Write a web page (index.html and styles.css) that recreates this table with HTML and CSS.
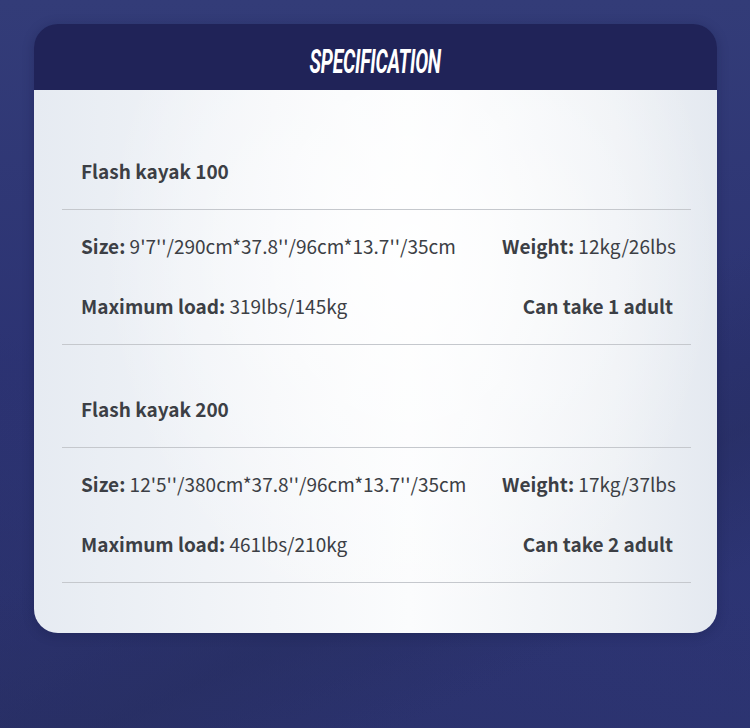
FILE: index.html
```html
<!DOCTYPE html>
<html lang="en">
<head>
<meta charset="utf-8">
<title>Specification</title>
<link rel="stylesheet" href="styles.css">
</head>
<body>
<div class="page">
  <div class="card">
    <div class="card-header">
      <h1 class="title">SPECIFICATION</h1>
    </div>
    <div class="card-body">
      <section class="group">
        <h2 class="model">Flash kayak 100</h2>
        <div class="specs">
          <div class="spec-row">
            <span><b>Size:</b> 9'7''/290cm*37.8''/96cm*13.7''/35cm</span>
            <span><b>Weight:</b> 12kg/26lbs</span>
          </div>
          <div class="spec-row">
            <span><b>Maximum load:</b> 319lbs/145kg</span>
            <span class="strong">Can take 1 adult</span>
          </div>
        </div>
      </section>
      <section class="group">
        <h2 class="model">Flash kayak 200</h2>
        <div class="specs">
          <div class="spec-row">
            <span><b>Size:</b> 12'5''/380cm*37.8''/96cm*13.7''/35cm</span>
            <span><b>Weight:</b> 17kg/37lbs</span>
          </div>
          <div class="spec-row">
            <span><b>Maximum load:</b> 461lbs/210kg</span>
            <span class="strong">Can take 2 adult</span>
          </div>
        </div>
      </section>
    </div>
  </div>
</div>
</body>
</html>
```

FILE: styles.css
```css
* { box-sizing: border-box; }
html, body { margin: 0; padding: 0; }
body {
  width: 750px;
  height: 728px;
  overflow: hidden;
  font-family: "Noto Sans CJK SC", "Noto Sans", sans-serif;
}
.page {
  width: 750px;
  height: 728px;
  padding: 24px 33px 0 34px;
  background:
    linear-gradient(155deg, rgba(60,70,130,0) 55%, rgba(38,45,95,0.55) 72%, rgba(50,60,120,0) 85%),
    linear-gradient(20deg, rgba(40,46,100,0.6) 0%, rgba(40,46,100,0) 40%),
    linear-gradient(180deg, #333c78 0%, #2c3373 50%, #2d3574 100%);
}
.card {
  width: 683px;
  border-radius: 24px;
  overflow: hidden;
  box-shadow: 0 2px 12px rgba(10, 15, 50, 0.25);
}
.card-header {
  height: 66px;
  background: #202358;
  display: flex;
  align-items: center;
  justify-content: center;
}
.title {
  margin: 7px 0 0 0;
  color: #ffffff;
  font-family: "Roboto", "Liberation Sans", sans-serif;
  font-weight: 700;
  font-style: italic;
  font-size: 34px;
  letter-spacing: -0.5px;
  line-height: 34px;
  transform: scaleX(0.57);
}
.card-body {
  height: 543px;
  padding: 17px 26px 0 28px;
  background:
    radial-gradient(ellipse 45% 70% at 55% 30%, rgba(255,255,255,0.9) 0%, rgba(255,255,255,0) 100%),
    linear-gradient(90deg, #e6ebf2 0%, #f4f6f9 35%, #fbfcfd 55%, #eef1f5 85%, #e4e9f0 100%);
  color: #3c3f45;
}
.group {
  border-bottom: 1px solid #c5c8cd;
}
.model {
  margin: 0;
  padding: 51px 0 25px 19px;
  font-size: 19px;
  line-height: 26px;
  font-weight: 700;
  border-bottom: 1px solid #c5c8cd;
}
.specs {
  display: flex;
  flex-direction: column;
  gap: 34px;
  padding: 23px 15px 25px 19px;
}
.spec-row {
  display: flex;
  justify-content: space-between;
  font-size: 19px;
  line-height: 26px;
  font-weight: 400;
}
.spec-row b, .strong { font-weight: 700; }
.strong { padding-right: 3px; }
```
